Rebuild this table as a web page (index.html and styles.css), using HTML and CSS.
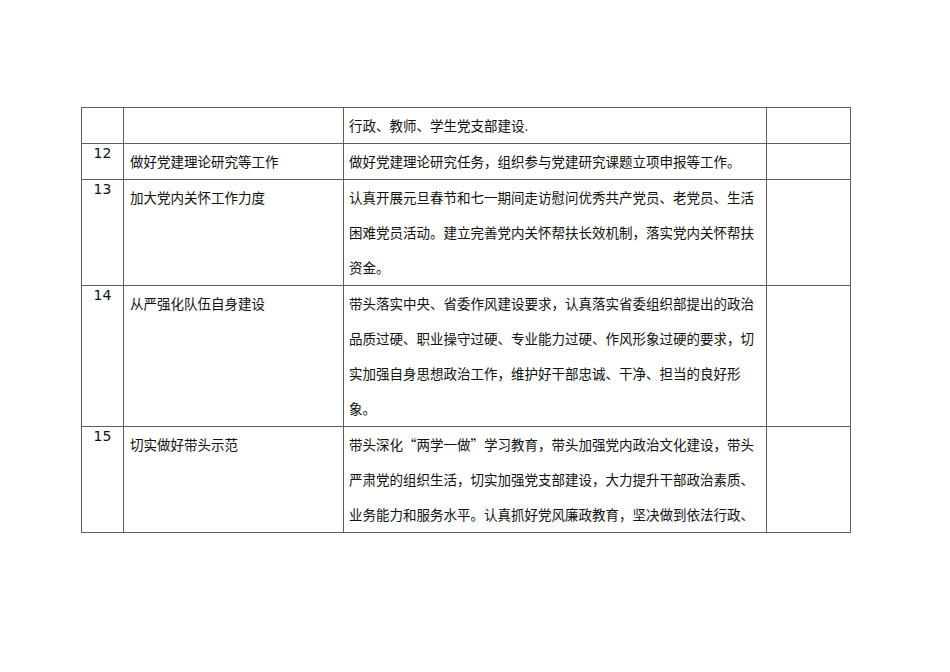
FILE: index.html
```html
<!DOCTYPE html>
<html lang="zh-CN">
<head>
<meta charset="utf-8">
<title>工作计划表</title>
<link rel="stylesheet" href="styles.css">
</head>
<body>
<div class="page">
  <table class="plan">
    <colgroup>
      <col class="c-no">
      <col class="c-item">
      <col class="c-desc">
      <col class="c-note">
    </colgroup>
    <tbody>
      <tr>
        <td class="no"></td>
        <td class="item"></td>
        <td class="desc">行政、教师、学生党支部建设.</td>
        <td class="note"></td>
      </tr>
      <tr>
        <td class="no">12</td>
        <td class="item">做好党建理论研究等工作</td>
        <td class="desc">做好党建理论研究任务，组织参与党建研究课题立项申报等工作。</td>
        <td class="note"></td>
      </tr>
      <tr>
        <td class="no">13</td>
        <td class="item">加大党内关怀工作力度</td>
        <td class="desc">认真开展元旦春节和七一期间走访慰问优秀共产党员、老党员、生活<br>困难党员活动。建立完善党内关怀帮扶长效机制，落实党内关怀帮扶<br>资金。</td>
        <td class="note"></td>
      </tr>
      <tr>
        <td class="no">14</td>
        <td class="item">从严强化队伍自身建设</td>
        <td class="desc">带头落实中央、省委作风建设要求，认真落实省委组织部提出的政治<br>品质过硬、职业操守过硬、专业能力过硬、作风形象过硬的要求，切<br>实加强自身思想政治工作，维护好干部忠诚、干净、担当的良好形<br>象。</td>
        <td class="note"></td>
      </tr>
      <tr>
        <td class="no">15</td>
        <td class="item">切实做好带头示范</td>
        <td class="desc">带头深化“两学一做”学习教育，带头加强党内政治文化建设，带头<br>严肃党的组织生活，切实加强党支部建设，大力提升干部政治素质、<br>业务能力和服务水平。认真抓好党风廉政教育，坚决做到依法行政、</td>
        <td class="note"></td>
      </tr>
    </tbody>
  </table>
</div>
</body>
</html>
```
FILE: styles.css
```css
html, body {
  margin: 0;
  padding: 0;
  background: #ffffff;
}

.page {
  padding: 107px 0 0 81px;
}

.plan {
  border-collapse: collapse;
  table-layout: fixed;
  width: 769px;
  font-family: "Noto Sans CJK SC", "DejaVu Sans", sans-serif;
  font-size: 13.5px;
  color: #111;
}

.c-no { width: 42px; }
.c-item { width: 220px; }
.c-desc { width: 423px; }
.c-note { width: 84px; }

.plan td {
  border: 1px solid #5f5f5f;
  vertical-align: top;
  padding: 0;
  line-height: 35px;
  white-space: nowrap;
  overflow: hidden;
}

.plan td.no {
  font-family: "DejaVu Sans", sans-serif;
  font-size: 14px;
  text-align: center;
  line-height: 18px;
}

.plan td.item {
  padding-left: 6px;
}

.plan td.desc {
  padding-left: 5px;
}
```
